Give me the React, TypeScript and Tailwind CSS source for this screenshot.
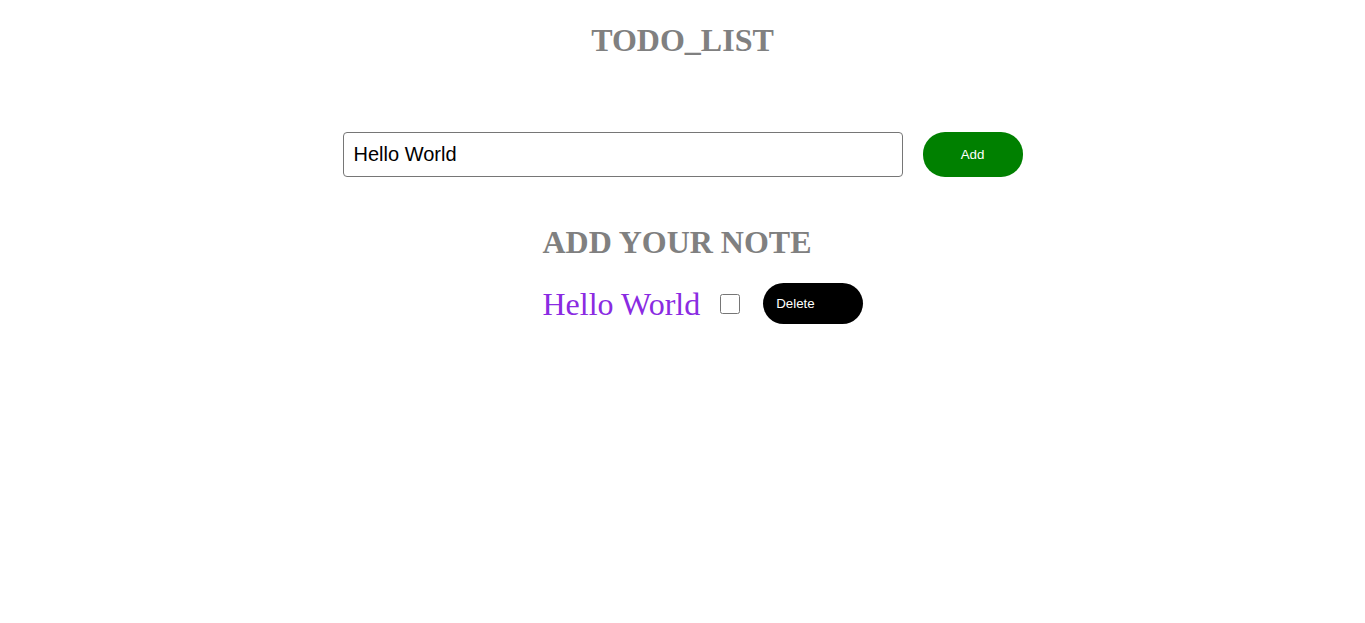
import React from "react";

export default function App() {
  return (
    <div className="min-h-[623px] w-full bg-white" style={{ fontFamily: '"Liberation Serif", "Times New Roman", serif' }}>
      <h1 className="pt-[22px] text-center text-[32px] leading-[37px] font-bold text-[#808080]">TODO_LIST</h1>
      <div className="mt-[73px] flex justify-center gap-[20px]">
        <input
          type="text"
          defaultValue="Hello World"
          className="h-[45px] w-[560px] rounded-[4px] border border-[#767676] bg-white px-[10px] text-[20px] text-black outline-none"
          style={{ fontFamily: '"Liberation Sans", Arial, sans-serif' }}
        />
        <button
          className="h-[45px] w-[100px] rounded-[22px] bg-[#008000] text-[13.33px] text-white"
          style={{ fontFamily: '"Liberation Sans", Arial, sans-serif' }}
        >
          Add
        </button>
      </div>
      <div className="mx-auto mt-[47px] w-[680px] pl-[200px]">
        <h2 className="text-[32px] leading-[37px] font-bold text-[#808080]">ADD YOUR NOTE</h2>
        <div className="mt-[22px] flex items-center">
          <span className="text-[32px] leading-[36px] text-[#8a2be2]">Hello World</span>
          <input type="checkbox" className="ml-[20px] h-[20px] w-[20px]" />
          <button
            className="ml-[23px] h-[41px] w-[100px] rounded-[21px] bg-black pl-[13px] text-left text-[13.33px] text-white"
            style={{ fontFamily: '"Liberation Sans", Arial, sans-serif' }}
          >
            Delete
          </button>
        </div>
      </div>
    </div>
  );
}
